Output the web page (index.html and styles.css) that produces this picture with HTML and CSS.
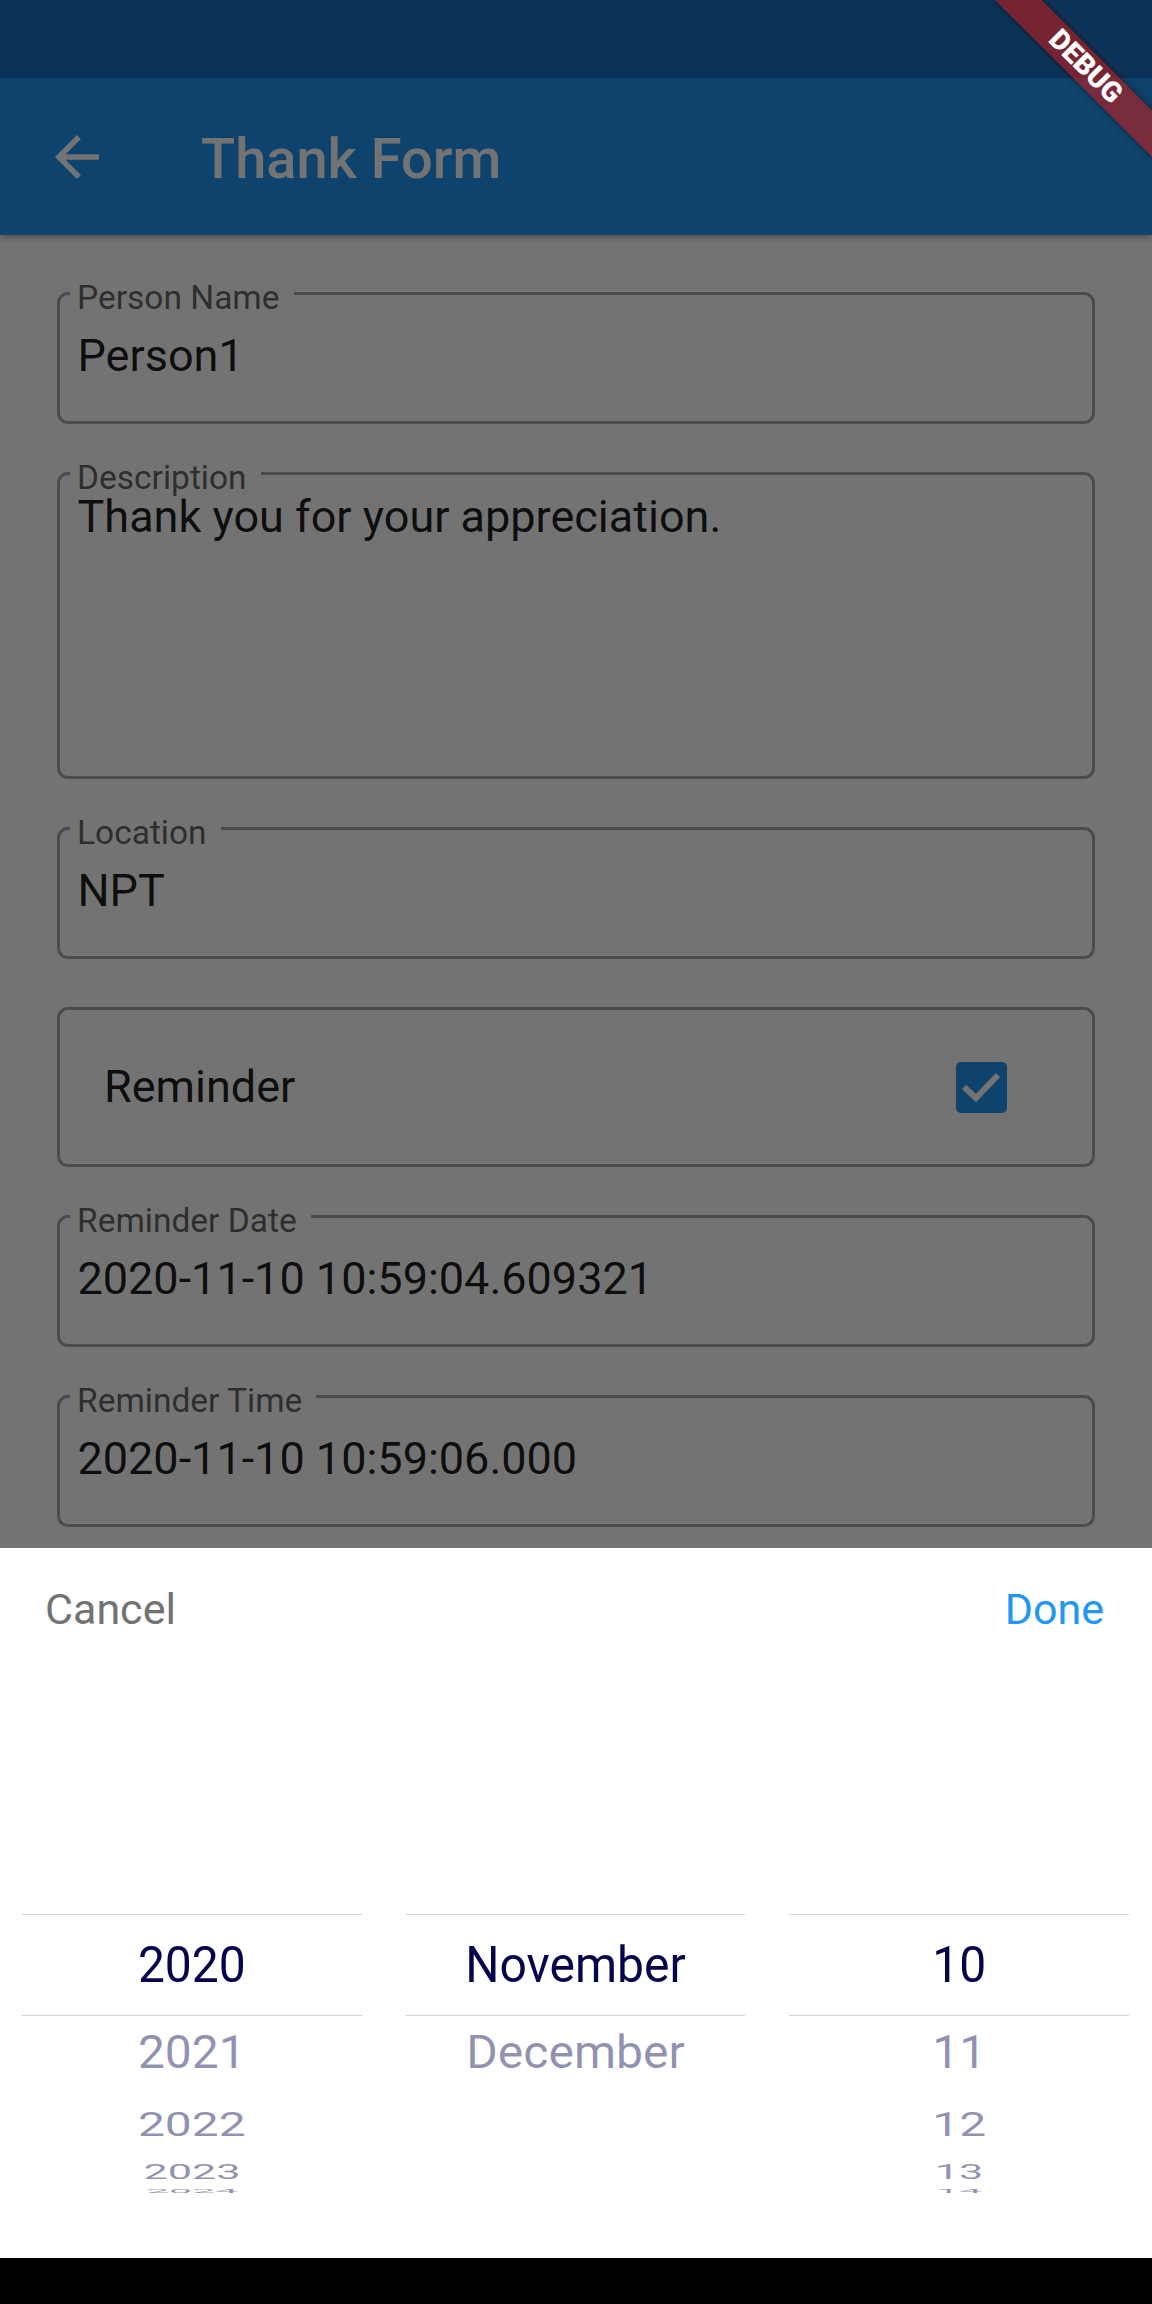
FILE: index.html
```html
<!DOCTYPE html>
<html lang="en">
<head>
<meta charset="utf-8">
<title>Thank Form</title>
<link rel="stylesheet" href="styles.css">
</head>
<body>
<div class="screen">
  <div class="status"></div>
  <header class="appbar">
    <svg class="back" viewBox="0 0 24 24" width="66" height="66"><path d="M20 11H7.83l5.59-5.59L12 4l-8 8 8 8 1.41-1.41L7.83 13H20v-2z" fill="#fff"/></svg>
    <h1 class="title">Thank Form</h1>
  </header>

  <main class="form">
    <div class="field">
      <span class="field-label">Person Name</span>
      <div class="field-value">Person1</div>
    </div>
    <div class="field field-multi">
      <span class="field-label">Description</span>
      <div class="field-value">Thank you for your appreciation.</div>
    </div>
    <div class="field">
      <span class="field-label">Location</span>
      <div class="field-value">NPT</div>
    </div>
    <div class="field toggle">
      <span class="field-value">Reminder</span>
      <span class="checkbox">
        <svg viewBox="0 0 51 51" width="51" height="51"><path d="M8 25 L20 36 L42 13" fill="none" stroke="#fff" stroke-width="6"/></svg>
      </span>
    </div>
    <div class="field">
      <span class="field-label">Reminder Date</span>
      <div class="field-value">2020-11-10 10:59:04.609321</div>
    </div>
    <div class="field">
      <span class="field-label">Reminder Time</span>
      <div class="field-value">2020-11-10 10:59:06.000</div>
    </div>
  </main>

  <div class="barrier"></div>

  <div class="bottom">
    <section class="sheet">
      <div class="sheet-actions">
        <span class="cancel">Cancel</span>
        <span class="done">Done</span>
      </div>
      <div class="picker">
        <div class="wheel">
          <div class="item sel"><span>2020</span></div>
          <div class="item r1"><span>2021</span></div>
          <div class="item r2"><span>2022</span></div>
          <div class="item r3"><span>2023</span></div>
          <div class="item r4"><span>2024</span></div>
        </div>
        <div class="wheel">
          <div class="item sel"><span>November</span></div>
          <div class="item r1"><span>December</span></div>
        </div>
        <div class="wheel">
          <div class="item sel"><span>10</span></div>
          <div class="item r1"><span>11</span></div>
          <div class="item r2"><span>12</span></div>
          <div class="item r3"><span>13</span></div>
          <div class="item r4"><span>14</span></div>
        </div>
      </div>
    </section>
    <div class="navbar"></div>
  </div>

  <div class="banner"><span>DEBUG</span></div>
</div>
</body>
</html>
```
FILE: styles.css
```css
body {
  margin: 0;
}

.screen {
  position: relative;
  width: 1152px;
  height: 2304px;
  overflow: hidden;
  background: #fff;
  font-family: Roboto, "Noto Sans", sans-serif;
}

.status {
  height: 78px;
  background: #1b70c0;
}

.appbar {
  height: 157px;
  background: #2196f3;
  display: flex;
  align-items: center;
  box-shadow: 0 3px 6px rgba(0, 0, 0, 0.3);
  position: relative;
}

.back {
  margin-left: 44px;
  flex: none;
}

.title {
  margin: 4px 0 0 91px;
  font-size: 56px;
  font-weight: 500;
  color: #fff;
}

.form {
  display: flex;
  flex-direction: column;
  gap: 48px;
  padding: 57px 57px 0;
}

.field {
  position: relative;
  height: 132px;
  box-sizing: border-box;
  border: 3px solid #a6a6a6;
  border-radius: 11px;
  padding: 35.5px 17.5px 0;
}

.field-label {
  position: absolute;
  top: -10.4px;
  left: 10px;
  padding: 0 14px 0 7px;
  background: #fff;
  font-size: 33.5px;
  line-height: 26px;
  color: rgba(0, 0, 0, 0.62);
}

.field-value {
  font-size: 45px;
  line-height: 50px;
  color: rgba(0, 0, 0, 0.88);
}

.field-multi {
  height: 307px;
  padding-top: 16.6px;
}

.toggle {
  height: 160px;
  padding: 0 85px 0 44px;
  display: flex;
  align-items: center;
  justify-content: space-between;
}

.checkbox {
  width: 51px;
  height: 51px;
  border-radius: 5px;
  background: #2196f3;
  display: block;
}

.checkbox svg {
  display: block;
}

.barrier {
  position: absolute;
  inset: 0;
  background: rgba(0, 0, 0, 0.55);
}

.bottom {
  position: absolute;
  left: 0;
  right: 0;
  bottom: 0;
}

.sheet {
  height: 710px;
  background: #fff;
  overflow: hidden;
}

.navbar {
  height: 46px;
  background: #000;
}

.sheet-actions {
  display: flex;
  justify-content: space-between;
  padding: 35px 48px 0 45px;
  font-size: 43px;
  line-height: 53px;
}

.cancel {
  color: #727272;
}

.done {
  color: #2196f3;
}

.picker {
  margin-top: 278px;
  padding: 0 23px 0 22px;
  display: flex;
  gap: 44px;
}

.wheel {
  flex: 1;
  display: flex;
  flex-direction: column;
}

.item {
  display: flex;
  align-items: center;
  justify-content: center;
  font-size: 48px;
  color: rgba(5, 5, 77, 0.45);
}

.item span {
  display: inline-block;
  line-height: 1;
}

.item.sel {
  height: 100px;
  border-top: 1px solid #d4d4d4;
  border-bottom: 1px solid #d4d4d4;
  color: #05054d;
}

.item.sel span {
  transform: scaleY(1.06);
}

.item.r1 {
  height: 72px;
}

.item.r1 span {
  transform: scaleY(0.97);
}

.item.r2 {
  height: 73px;
}

.item.r2 span {
  transform: scaleY(0.68);
}

.item.r3 {
  height: 22px;
}

.item.r3 span {
  transform: scale(0.9, 0.41);
}

.item.r4 {
  height: 16px;
}

.item.r4 span {
  transform: scale(0.85, 0.12);
}

.banner {
  position: absolute;
  top: 77.6px;
  right: -110.8px;
  width: 221.6px;
  height: 33.2px;
  transform-origin: 110.8px -77.6px;
  transform: rotate(45deg);
  background: rgba(183, 28, 28, 0.627);
  box-shadow: 0 0 6px rgba(0, 0, 0, 0.5);
  display: flex;
  align-items: center;
  justify-content: center;
}

.banner span {
  color: #fff;
  font-size: 28.3px;
  font-weight: 900;
  line-height: 1;
}
```
